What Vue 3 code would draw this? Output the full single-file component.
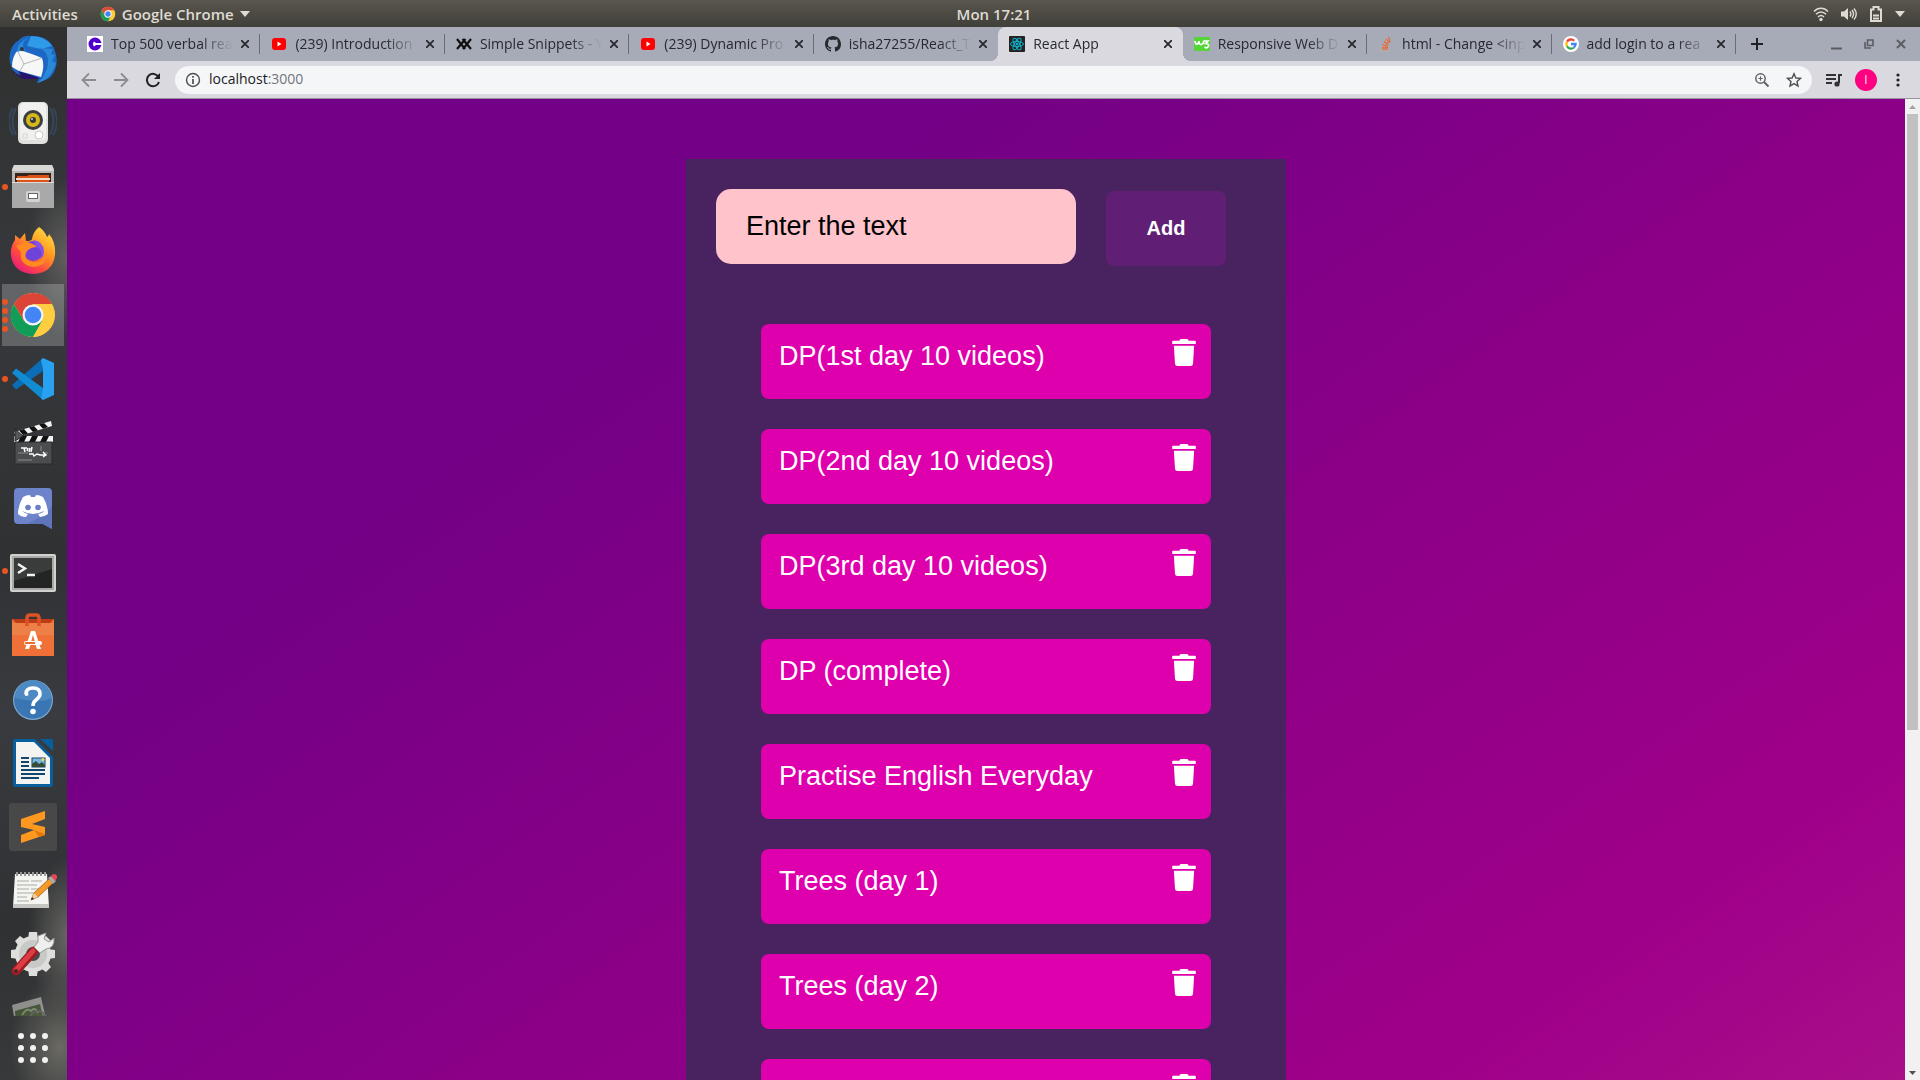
<script setup>
import { ref } from 'vue'

const tabs = [
  { icon: 'cube', title: 'Top 500 verbal rea' },
  { icon: 'youtube', title: '(239) Introduction' },
  { icon: 'snippets', title: 'Simple Snippets - Y' },
  { icon: 'youtube', title: '(239) Dynamic Pro' },
  { icon: 'github', title: 'isha27255/React_T' },
  { icon: 'react', title: 'React App', active: true },
  { icon: 'w3', title: 'Responsive Web D' },
  { icon: 'stack', title: 'html - Change <inp' },
  { icon: 'google', title: 'add login to a rea' }
]

const apps = [
  { name: 'thunderbird', dots: 0 },
  { name: 'rhythmbox', dots: 0 },
  { name: 'files', dots: 1 },
  { name: 'firefox', dots: 0 },
  { name: 'chrome', dots: 4, active: true },
  { name: 'vscode', dots: 1 },
  { name: 'clapper', dots: 0 },
  { name: 'discord', dots: 0 },
  { name: 'terminal', dots: 1 },
  { name: 'software', dots: 0 },
  { name: 'help', dots: 0 },
  { name: 'writer', dots: 0 },
  { name: 'sublime', dots: 0 },
  { name: 'notes', dots: 0 },
  { name: 'settings', dots: 0 },
  { name: 'viewer', dots: 1, faded: true }
]

const draft = ref('')
const items = ref([
  'DP(1st day 10 videos)',
  'DP(2nd day 10 videos)',
  'DP(3rd day 10 videos)',
  'DP (complete)',
  'Practise English Everyday',
  'Trees (day 1)',
  'Trees (day 2)',
  ''
])

function addItem() {
  if (draft.value.trim()) {
    items.value.push(draft.value)
    draft.value = ''
  }
}
function removeItem(index) {
  items.value.splice(index, 1)
}
</script>

<template>
  <div class="desktop">
    <header class="panel">
      <div class="panel-left">
        <button class="panel-btn">Activities</button>
        <button class="panel-btn app-menu">
          <svg width="16" height="16" viewBox="0 0 48 48">
            <circle cx="24" cy="24" r="22" fill="#fcc934" />
            <path d="M4.9 13A22 22 0 0 1 43.1 13H24L14.500 29.500z" fill="#dd4b3e" />
            <path d="M4.900 13A22 22 0 0 0 24 46L33.500 29.500H14.500z" fill="#1a9b57" />
            <circle cx="24" cy="24" r="11" fill="#fff" />
            <circle cx="24" cy="24" r="8" fill="#4285f4" />
          </svg>
          Google Chrome
          <svg width="10" height="6" viewBox="0 0 10 6"><path d="M0 0h10L5 6z" fill="#dfdbd2" /></svg>
        </button>
      </div>
      <time class="clock">Mon 17:21</time>
      <div class="panel-right">
        <svg width="16" height="16" viewBox="0 0 16 16" fill="none" stroke="#dfdbd2" stroke-width="1.600">
          <path d="M1 5.500C5 1.200 11 1.200 15 5.500M3 8.300C6 5.200 10 5.200 13 8.300M5 11C7 9 9 9 11 11" />
          <circle cx="8" cy="13.500" r="1.700" fill="#dfdbd2" stroke="none" />
        </svg>
        <svg width="16" height="16" viewBox="0 0 16 16" fill="none" stroke="#dfdbd2" stroke-width="1.400">
          <path d="M0 5.500h3L7 2v12L3 10.500H0z" fill="#dfdbd2" stroke="none" />
          <path d="M9 5.500q1.600 2.500 0 5M11 4q3 4 0 8M13 2.500q4.500 5.500 0 11" />
        </svg>
        <svg width="14" height="16" viewBox="0 0 14 16" fill="none" stroke="#dfdbd2" stroke-width="2">
          <path d="M2 15V3.500h2.500V1h5v2.500H12V15zM4 12.500h6M4 9.500h6" />
        </svg>
        <svg width="10" height="6" viewBox="0 0 10 6"><path d="M0 0h10L5 6z" fill="#dfdbd2" /></svg>
      </div>
    </header>

    <div class="workspace">
      <nav class="dock">
        <div class="dock-list">
          <button v-for="app in apps" :key="app.name" class="dock-item" :class="{ active: app.active, faded: app.faded }" :aria-label="app.name">
            <span class="dots"><i v-for="n in app.dots" :key="n"></i></span>
            <svg width="48" height="48" viewBox="0 0 48 48">
              <g v-if="app.name === 'thunderbird'">
                <path d="M10 5Q15 0 22 1Q38 0 45 13Q50 25 46 35Q42 44 36 45L28 48L30 43Q10 44 3 34Q-2 22 3 12Q6 7 10 5z" fill="#1c67c4" />
                <path d="M22 1Q36 1 43 11L32 14L18 11z" fill="#2f9be8" />
                <path d="M30 13Q42 17 38 34L33 44L28 48Q42 45 47 28L43 26L46 20L42 19L44 14z" fill="#2b8ad8" />
                <path d="M3 30L5 38L12 41L9 36L28 42L31 44L14 44Q3 39 3 30z" fill="#28126b" />
                <path d="M9 15Q19 17 33 23Q36 31 32 42L10 36L3 32Q3 21 9 15z" fill="#f7f7f8" />
                <path d="M9 17L15 29L33 23M15 29L11 36" fill="none" stroke="#b7b8bd" />
                <path d="M8 17Q8 7 19 3Q11 8 16 15z" fill="#258bd9" />
                <circle cx="13" cy="14" r="2" fill="#3c3340" />
              </g>
              <g v-else-if="app.name === 'rhythmbox'">
                <path d="M7 9Q0 22 7 36M4 9Q-4 22 4 36M41 9Q48 22 41 36M44 9Q52 22 44 36" fill="none" stroke="#36475c" stroke-width="2" />
                <rect x="9" y="3" width="30" height="42" rx="5" fill="#e0e0de" />
                <rect x="11" y="4" width="26" height="37" rx="4" fill="#f0f0ee" />
                <circle cx="24" cy="21" r="10" fill="#3c3f42" />
                <circle cx="24" cy="21" r="7" fill="#d4b818" />
                <circle cx="24" cy="21" r="3" fill="#34393d" />
                <circle cx="23" cy="20" r="1" fill="#c9d2d8" />
                <circle cx="30" cy="36" r="4" fill="#fff" stroke="#c8c8c5" />
                <rect x="14" y="35" width="4" height="4" fill="none" stroke="#d5d5d2" />
              </g>
              <g v-else-if="app.name === 'files'">
                <path d="M5 2H43L45 6V45H3V6z" fill="#b6b6b5" />
                <path d="M5 2H43L45 8H3z" fill="#d8d8d7" />
                <path d="M6 10H42V20H6z" fill="#35241c" />
                <path d="M8 13h10l2-1h20v8H8z" fill="#dd5318" />
                <path d="M7 15h34v2H7z" fill="#f5dcc4" />
                <path d="M3 19H45V45H3z" fill="#aaa9a9" />
                <path d="M3 19H45V20H3z" fill="#dcdcdb" />
                <rect x="17" y="28" width="14" height="11" rx="2" fill="#d2d2d1" />
                <rect x="19.500" y="30.500" width="9" height="5" fill="#fff" stroke="#686868" />
              </g>
              <g v-else-if="app.name === 'firefox'">
                <defs>
                  <linearGradient id="ffBody" x1="1" y1="0" x2="0.300" y2="1">
                    <stop offset="0" stop-color="#fff14b" /><stop offset="0.450" stop-color="#ff9a22" /><stop offset="0.750" stop-color="#ff4a3e" /><stop offset="1" stop-color="#e91f78" />
                  </linearGradient>
                </defs>
                <path d="M30 0Q35 3 38 10Q40 9 40 7Q47 15 46 28Q44 46 24 47Q5 46 2 29Q1 20 6 13V8L11 12L16 6L17 14Q23 14 23 12Q24 5 30 0z" fill="url(#ffBody)" />
                <circle cx="24" cy="24" r="10" fill="#7043d8" />
                <path d="M14 16Q22 14 28 20Q22 20 18 24Q13 32 24 35Q34 35 36 26Q40 38 25 40Q10 38 12 25L7 19z" fill="#ff8b22" />
                <path d="M24 13Q34 14 35 24Q35 30 31 32Q35 24 28 20z" fill="#8851e6" />
              </g>
              <g v-else-if="app.name === 'chrome'">
                <circle cx="24" cy="24" r="22" fill="#ffcd40" />
                <path d="M4.900 13A22 22 0 0 1 43.100 13H24L14.500 29.500z" fill="#db4437" />
                <path d="M4.900 13A22 22 0 0 0 24 46L33.500 29.500L14.500 29.500z" fill="#0f9d58" />
                <path d="M43 14H24V24L33.500 29.500L24 46A22 22 0 0 0 43 14z" fill="#ffcd40" />
                <circle cx="24" cy="24" r="10.500" fill="#f4f4f4" />
                <circle cx="24" cy="24" r="8.300" fill="#4285f4" />
              </g>
              <g v-else-if="app.name === 'vscode'">
                <path d="M3 30L34 3V16L7 34.500z" fill="#0b6db5" />
                <path d="M3 18L7 13.500L34 33V45z" fill="#118bd2" />
                <path d="M34 3L45 8V40L34 45L32 43L34 35V14L32 5z" fill="#29a1f1" />
              </g>
              <g v-else-if="app.name === 'clapper'">
                <path d="M5 13L42 2L43 7L7 18z" fill="#f3f3f3" />
                <path d="M10 11.500L15 10L19 14.500L14 16zM20 8.500L25 7L29 11.500L24 13zM30 5.500L35 4L39 8L34 9.700z" fill="#111" />
                <rect x="5" y="17" width="39" height="6" fill="#f3f3f3" />
                <path d="M12 17h6l-3 6H9zM23 17h6l-3 6h-6zM34 17h6l-3 6h-6z" fill="#111" />
                <path d="M6 10L14 17L6 22z" fill="#55585b" stroke="#24282a" />
                <rect x="6" y="23" width="37" height="22" fill="#4c4d4e" stroke="#292b2c" />
                <path d="M12 29h6M15 29l1 4M18 32l1-3M20 33l1-4M22 33l1-5M20 35h4l1 2 3-2 3 1h6M34 33l3 3-3 2" stroke="#fff" stroke-width="1.500" fill="none" />
                <path d="M9 34h10M9 41h14M32 27v5M36 34h3" stroke="#8b8c8c" fill="none" />
              </g>
              <g v-else-if="app.name === 'discord'">
                <path d="M9 5H39Q43 5 43 9V46L34 41H9Q5 41 5 37V9Q5 5 9 5z" fill="#6d83ca" />
                <path d="M43 23V46L34 41H18L37 31z" fill="#5e74bb" />
                <path d="M14 14Q17 12 21 12L22 14H26L27 12Q31 12 34 14Q39 22 39 31Q35 34 31 34L29 31Q34 30 35 28Q29 31 24 31Q19 31 13 28Q15 30 19 31L17 34Q12 34 9 31Q9 22 14 14z" fill="#fff" />
                <circle cx="19" cy="24.500" r="2.800" fill="#687fc5" /><circle cx="29" cy="24.500" r="2.800" fill="#687fc5" />
              </g>
              <g v-else-if="app.name === 'terminal'">
                <rect x="1" y="7" width="46" height="38" rx="2" fill="#d1d1d0" />
                <rect x="3" y="9" width="42" height="34" fill="#a8a8a7" />
                <rect x="5" y="11" width="38" height="30" fill="#222524" />
                <path d="M5 11H43V22L5 34z" fill="#393c3b" />
                <path d="M9 17L16 21.500L9 26M18 28H26" fill="none" stroke="#f1f1f1" stroke-width="2.500" />
              </g>
              <g v-else-if="app.name === 'software'">
                <path d="M3 8H45V45H3z" fill="#ef7138" />
                <path d="M3 8H45L41 12H7z" fill="#bd3b17" />
                <path d="M3 12H45V24H3z" fill="#ed8049" />
                <path d="M18 15V7Q18 4 21 4H27Q30 4 30 7V15" fill="none" stroke="#de5224" stroke-width="3.500" />
                <path d="M16 38L22 20H26L32 38H28L26 32H22L20 38z" fill="#fff" />
                <path d="M24 24L26 31H22z" fill="#ef7138" />
                <path d="M17 32H31" stroke="#fff" stroke-width="4" stroke-linecap="round" />
                <path d="M16 32H26" stroke="#ee6c32" stroke-width="2" />
              </g>
              <g v-else-if="app.name === 'help'">
                <circle cx="24" cy="25" r="20" fill="#7ca8cf" />
                <circle cx="24" cy="25" r="18.800" fill="#3976b3" />
                <path d="M6 23A18 18 0 0 1 42 23Q34 29 6 23z" fill="#4d8ac3" />
                <path d="M17 19Q17 13 24 13Q31 13 31 19Q31 22 27 25Q24 27 24 31" fill="none" stroke="#fff" stroke-width="3.500" />
                <circle cx="17.500" cy="19" r="2" fill="#fff" />
                <circle cx="24" cy="36.500" r="2.800" fill="#fff" />
              </g>
              <g v-else-if="app.name === 'writer'">
                <path d="M6 0H26L44 18V46Q44 48 42 48H6Q4 48 4 46V2Q4 0 6 0z" fill="#075e9c" />
                <path d="M31 0H42Q44 0 44 2V12z" fill="#075e9c" />
                <path d="M7 3H25L41 19V45H7z" fill="#f3f3f2" />
                <path d="M12 19h8M12 23h8M12 27h8M12 31h24M12 35h24M12 39h18" stroke="#12456b" stroke-width="2" />
                <rect x="23" y="19" width="13" height="9" fill="#79b7df" stroke="#12456b" />
                <path d="M23 28V25L27 22L30 25L33 23L36 26V28z" fill="#344d3a" /><circle cx="34" cy="20.500" r="1.500" fill="#f8d24b" />
              </g>
              <g v-else-if="app.name === 'sublime'">
                <rect width="48" height="48" rx="3" fill="#484848" />
                <path d="M12 16L36 8V16L23 21L36 24V32L12 40V32L25 27L12 24z" fill="#ff9820" />
                <path d="M25 27L36 31V32L30 34z" fill="#e5780d" />
              </g>
              <g v-else-if="app.name === 'notes'">
                <path d="M6 7H38L40 40H4z" fill="#f4f4f0" /><path d="M4 37H40V41H4z" fill="#c4c5c0" />
                <path d="M8 9V5M12 9V5M16 9V5M20 9V5M24 9V5M28 9V5M32 9V5M36 9V5" stroke="#999" stroke-width="2" />
                <path d="M8 14h12M22 14h11M8 18h20M8 22h12M22 22h9M8 26h17M8 30h10M8 34h12" stroke="#a9a9a5" />
                <path d="M22 33L25 26L40 12L44 16L29 30z" fill="#f39b28" stroke="#a75c17" stroke-width="0.800" />
                <path d="M22 33L25 26L29 30z" fill="#edcea4" /><path d="M22 33L23 30L25 32z" fill="#222" />
                <path d="M39 11L42 9L47 14L44 17z" fill="#a8abad" /><path d="M42 9L44 7Q49 7 48 11L46 14z" fill="#e74752" />
              </g>
              <g v-else-if="app.name === 'settings'">
                <circle cx="24" cy="23" r="18" fill="#dededc" />
                <path d="M20 1h8l1 8h-10zM20 45h8l1-8h-10zM2 19v8l8 1v-10zM46 19v8l-8 1v-10zM6 10l5-5 7 5-7 7zM42 10l-5-5-7 5 7 7zM6 36l5 5 7-5-7-7zM42 36l-5 5-7-5 7-7z" fill="#dededc" />
                <circle cx="24" cy="23" r="14" fill="#c9cac8" /><circle cx="24" cy="23" r="7" fill="#484a4b" />
                <path d="M7 40L25 20" stroke="#9d1c22" stroke-width="9" stroke-linecap="round" />
                <path d="M7 39L24 20" stroke="#dc3d43" stroke-width="5" stroke-linecap="round" />
                <path d="M25 16L29 11L29 5L37 2L35 8L40 11L45 7Q46 17 37 18L31 22z" fill="#efefed" stroke="#969795" />
                <circle cx="7" cy="40" r="2" fill="#4a2527" />
              </g>
              <g v-else>
                <path d="M3 10L32 2L36 20L6 28z" fill="#c8c8c5" /><path d="M6 16L31 9L34 22L7 28z" fill="#4e6536" />
                <path d="M13 20q5-8 9-4q4-5 7 2" fill="none" stroke="#a4b58d" stroke-width="2" /><circle cx="29" cy="24" r="8" fill="none" stroke="#777" stroke-width="2" />
              </g>
            </svg>
          </button>
        </div>
        <button class="dock-item" aria-label="Show applications">
          <svg width="30" height="30" viewBox="0 0 30 30" fill="#f2f2f0">
            <template v-for="r in 3" :key="r">
              <circle v-for="c in 3" :key="c" :cx="c * 12 - 9" :cy="r * 12 - 9" r="3" />
            </template>
          </svg>
        </button>
      </nav>

      <main class="browser">
        <div class="tabstrip">
          <div class="tabs">
            <div v-for="(tab, i) in tabs" :key="i" class="tab" :class="{ active: tab.active, plain: tabs[i + 1] && tabs[i + 1].active }">
              <svg class="favicon" width="16" height="16" viewBox="0 0 16 16">
                <g v-if="tab.icon === 'cube'">
                  <rect width="16" height="16" fill="#fff" /><circle cx="8" cy="8" r="6.500" fill="#5200cc" /><path d="M7 5.500Q5 8 7 10.500L9 9H15V7H9z" fill="#fff" />
                </g>
                <g v-else-if="tab.icon === 'youtube'">
                  <rect x="1" y="2" width="14" height="12" rx="3" fill="#f00" /><path d="M6.500 5.500L10.500 8L6.500 10.500z" fill="#fff" />
                </g>
                <g v-else-if="tab.icon === 'snippets'" fill="none" stroke="#111" stroke-width="2.200">
                  <path d="M1 3L9 13M9.500 3L1 13M6.500 3L15 13M15 3L7 13" />
                </g>
                <path v-else-if="tab.icon === 'github'" fill="#24292e" d="M8 0C3.580 0 0 3.580 0 8c0 3.540 2.290 6.530 5.470 7.590.4.070.550-.170.550-.380 0-.190-.010-.820-.010-1.490-2.010.370-2.530-.490-2.690-.940-.090-.230-.480-.940-.820-1.130-.280-.150-.680-.520-.010-.530.630-.010 1.080.580 1.230.820.720 1.210 1.870.870 2.330.660.070-.520.280-.870.510-1.070-1.780-.2-3.640-.890-3.640-3.950 0-.870.310-1.590.820-2.150-.080-.2-.360-1.020.080-2.120 0 0 .670-.210 2.200.820.640-.180 1.320-.270 2-.270s1.360.090 2 .270c1.530-1.040 2.200-.820 2.200-.820.440 1.100.160 1.920.080 2.120.510.560.820 1.270.820 2.150 0 3.070-1.870 3.750-3.650 3.950.290.250.540.730.540 1.480 0 1.070-.010 1.930-.010 2.200 0 .210.150.460.550.380A8.010 8.010 0 0 0 16 8c0-4.420-3.580-8-8-8z" />
                <g v-else-if="tab.icon === 'react'" fill="none" stroke="#0fb5cd">
                  <rect width="16" height="16" rx="1" fill="#222" stroke="none" />
                  <ellipse cx="8" cy="8" rx="6.500" ry="2.500" /><ellipse cx="8" cy="8" rx="6.500" ry="2.500" transform="rotate(60 8 8)" /><ellipse cx="8" cy="8" rx="6.500" ry="2.500" transform="rotate(120 8 8)" />
                  <circle cx="8" cy="8" r="1" fill="#0fb5cd" />
                </g>
                <g v-else-if="tab.icon === 'w3'" fill="none" stroke="#fff" stroke-width="1.700">
                  <rect y="1" width="16" height="14" fill="#56d53b" stroke="none" />
                  <path d="M1 5Q1.500 9 3.500 8Q5 7 5 5Q5 9 7.500 8.500Q9 8 10 5H14L11.500 7.500Q15 7.500 14.500 10Q13.500 13 10.500 11" />
                </g>
                <g v-else-if="tab.icon === 'stack'" fill="none">
                  <path d="M2 10V15H11V10" stroke="#bcaba7" stroke-width="1.300" /><path d="M4 13H10M4 11L10 11.500M4.500 8.500L10 10M6 5.500L10.500 8.500M8 3L11.500 7M10.500 1L12 6" stroke="#f4601c" stroke-width="1.100" />
                </g>
                <g v-else fill="none" stroke-width="2.300">
                  <circle cx="8" cy="8" r="8" fill="#fff" />
                  <path d="M11.200 4.800A4.600 4.600 0 0 0 4 5.700" stroke="#ea4335" /><path d="M4 5.700A4.600 4.600 0 0 0 4 10.300" stroke="#fbbc05" /><path d="M4 10.300A4.600 4.600 0 0 0 11 11.500" stroke="#34a853" /><path d="M11 11.500Q12.600 10 12.600 8H8" stroke="#4285f4" />
                </g>
              </svg>
              <span class="title">{{ tab.title }}</span>
              <button class="close" aria-label="Close tab">
                <svg width="8" height="8" viewBox="0 0 8 8"><path d="M0 0L8 8M8 0L0 8" stroke="currentColor" stroke-width="1.800" /></svg>
              </button>
            </div>
          </div>
          <div class="window-actions">
            <button class="new-tab" aria-label="New tab"><svg width="12" height="12" viewBox="0 0 12 12"><path d="M6 0V12M0 6H12" stroke="#202124" stroke-width="2" /></svg></button>
            <button aria-label="Minimize"><svg width="11" height="12" viewBox="0 0 11 12"><path d="M0 10.500H11" stroke="#5b5d63" stroke-width="2" /></svg></button>
            <button aria-label="Restore"><svg width="10" height="10" viewBox="0 0 10 10"><path d="M3.500 1H9V6.500H3.500zM1 3V9H7" fill="none" stroke="#5b5d63" stroke-width="1.600" /></svg></button>
            <button aria-label="Close window"><svg width="10" height="10" viewBox="0 0 10 10"><path d="M1 1L9 9M9 1L1 9" stroke="#5b5d63" stroke-width="2" /></svg></button>
          </div>
        </div>

        <div class="toolbar">
          <button class="tool" aria-label="Back"><svg width="16" height="16" viewBox="0 0 16 16"><path d="M15 8H2M8 1.500L1.500 8L8 14.500" fill="none" stroke="#8b8b90" stroke-width="1.800" /></svg></button>
          <button class="tool" aria-label="Forward"><svg width="16" height="16" viewBox="0 0 16 16"><path d="M1 8H14M8 1.500L14.500 8L8 14.500" fill="none" stroke="#8b8b90" stroke-width="1.800" /></svg></button>
          <button class="tool" aria-label="Reload"><svg width="16" height="16" viewBox="0 0 16 16"><path d="M13.500 5A6.200 6.200 0 1 0 14 10" fill="none" stroke="#202124" stroke-width="2" /><path d="M15 1V7H9z" fill="#202124" /></svg></button>
          <div class="omnibox">
            <svg width="16" height="16" viewBox="0 0 16 16"><circle cx="8" cy="8" r="6.500" fill="none" stroke="#4b4e53" stroke-width="1.400" /><path d="M8 7V12M8 4V5.800" stroke="#4b4e53" stroke-width="1.700" /></svg>
            <a class="address" href="#">localhost<span>:3000</span></a>
            <button class="tool" aria-label="Zoom"><svg width="16" height="16" viewBox="0 0 16 16" fill="none" stroke="#5f6368"><circle cx="6.500" cy="6.500" r="4.700" stroke-width="1.500" /><path d="M10 10L14.500 14.500" stroke-width="2" /><path d="M6.500 4.300V8.700M4.300 6.500H8.700" /></svg></button>
            <button class="tool" aria-label="Bookmark"><svg width="16" height="16" viewBox="0 0 16 16"><path d="M8 1.800L9.900 6L14.500 6.400L11 9.500L12 14L8 11.600L4 14L5 9.500L1.500 6.400L6.100 6z" fill="none" stroke="#4b4e53" stroke-width="1.400" /></svg></button>
          </div>
          <div class="profile">
            <button class="tool" aria-label="Media"><svg width="16" height="14" viewBox="0 0 16 14"><path d="M0 2H10M0 6H10M0 10H6M13 10V2H16" fill="none" stroke="#303236" stroke-width="2" /><circle cx="11" cy="11" r="2.600" fill="#303236" /></svg></button>
            <button class="tool" aria-label="Profile"><span class="avatar">I</span></button>
            <button class="tool" aria-label="Menu"><svg width="4" height="14" viewBox="0 0 4 14" fill="#202124"><circle cx="2" cy="2" r="1.600" /><circle cx="2" cy="7" r="1.600" /><circle cx="2" cy="12" r="1.600" /></svg></button>
          </div>
        </div>

        <div class="viewport">
          <div class="page">
            <section class="card">
              <form class="entry" @submit.prevent="addItem">
                <input v-model="draft" type="text" placeholder="Enter the text" aria-label="Enter the text" />
                <button type="submit">Add</button>
              </form>
              <ul class="list">
                <li v-for="(item, i) in items" :key="i">
                  <span>{{ item }}</span>
                  <button aria-label="Delete" @click="removeItem(i)">
                    <svg width="24" height="27" viewBox="0 0 448 512"><path fill="#fff" d="M432 32H312l-9.400-18.700A24 24 0 0 0 281.100 0H166.800a23.720 23.720 0 0 0-21.400 13.300L136 32H16A16 16 0 0 0 0 48v32a16 16 0 0 0 16 16h416a16 16 0 0 0 16-16V48a16 16 0 0 0-16-16zM53.200 467a48 48 0 0 0 47.900 45h245.800a48 48 0 0 0 47.900-45L416 128H32z" /></svg>
                  </button>
                </li>
              </ul>
            </section>
          </div>
          <div class="scrollbar">
            <svg width="15" height="15" viewBox="0 0 15 15"><path d="M4 10L7.500 6L11 10z" fill="#a3a3a3" /></svg>
            <div class="track"><div class="thumb"></div></div>
            <svg width="15" height="15" viewBox="0 0 15 15"><path d="M4 6H11L7.500 10z" fill="#505050" /></svg>
          </div>
        </div>
      </main>
    </div>
  </div>
</template>

<style>
body {
  overflow: hidden;
}
</style>

<style scoped>
* {
  box-sizing: border-box;
}
button {
  border: 0;
  padding: 0;
  background: none;
  font: inherit;
  color: inherit;
}
svg {
  display: block;
  flex: none;
}
.desktop {
  height: 100vh;
  display: flex;
  flex-direction: column;
  overflow: hidden;
  font-family: "Open Sans", "Noto Sans", sans-serif;
  font-size: 14px;
}
.panel {
  flex: none;
  height: 27px;
  display: flex;
  align-items: center;
  background: linear-gradient(#59564e, #403f39);
  color: #dfdbd2;
  font-size: 15px;
  font-weight: 600;
  line-height: 20px;
}
.panel-left {
  flex: 1 1 83px;
  display: flex;
  gap: 22px;
  padding-left: 12px;
}
.app-menu {
  display: flex;
  align-items: center;
  gap: 6px;
}
.panel-right {
  flex: 1 1 0;
  display: flex;
  align-items: center;
  justify-content: flex-end;
  gap: 12px;
  padding-right: 15px;
}
.workspace {
  flex: 1;
  min-height: 0;
  display: flex;
}
.dock {
  flex: none;
  width: 67px;
  display: flex;
  flex-direction: column;
  background:
    radial-gradient(ellipse 40px 80px at 66px 230px, #5f5e5c, transparent),
    radial-gradient(ellipse 40px 80px at 68px 910px, #666560, transparent),
    radial-gradient(ellipse 50px 70px at 60px 1020px, #6a6962, transparent),
    linear-gradient(#303030, #36393c 25%, #303133 50%, #393b40 65%, #2f3133 85%, #37393b);
}
.dock-list {
  flex: 1;
  min-height: 0;
  overflow: hidden;
}
.dock-item {
  width: 66px;
  height: 64px;
  display: flex;
  align-items: center;
  justify-content: center;
  position: relative;
}
.dock-item.active {
  background: linear-gradient(#ffffff38, #ffffff38) 2px 1px / 62px 62px no-repeat;
}
.dock-item.faded {
  opacity: 0.6;
}
.dots {
  position: absolute;
  left: 2px;
  top: 0;
  height: 100%;
  display: flex;
  flex-direction: column;
  justify-content: center;
  gap: 3px;
}
.dots i {
  width: 6px;
  height: 6px;
  border-radius: 50%;
  background: #e95420;
}
.browser {
  flex: 1;
  min-width: 0;
  display: flex;
  flex-direction: column;
}
.tabstrip {
  flex: none;
  height: 34px;
  display: flex;
  padding-left: 9px;
  background: #a7abb8;
  color: #26292e;
}
.tabs {
  flex: 1;
  min-width: 0;
  display: flex;
}
.tab {
  flex: 1 1 0;
  min-width: 0;
  display: flex;
  align-items: center;
  padding: 0 11px;
  position: relative;
}
.tab::after {
  content: "";
  position: absolute;
  right: 0;
  top: 7px;
  width: 1px;
  height: 20px;
  background: #6b6e77;
}
.tab.active::after,
.tab.plain::after {
  display: none;
}
.tab.active {
  background: #dad9e0;
  border-radius: 8px 8px 0 0;
}
.tab.active::before {
  content: "";
  position: absolute;
  left: -8px;
  right: -8px;
  bottom: 0;
  height: 8px;
  background:
    radial-gradient(circle at 0 0, transparent 8px, #dad9e0 8px) left / 8px 8px no-repeat,
    radial-gradient(circle at 100% 0, transparent 8px, #dad9e0 8px) right / 8px 8px no-repeat;
}
.title {
  flex: 1;
  min-width: 0;
  margin-left: 8px;
  overflow: hidden;
  white-space: nowrap;
  line-height: 20px;
  mask-image: linear-gradient(to right, #000 calc(100% - 32px), transparent);
}
.close {
  flex: none;
  width: 8px;
  height: 8px;
  margin: 0 0 0 8px;
}
.window-actions {
  flex: none;
  width: 184px;
  display: flex;
  align-items: center;
  gap: 22px;
  padding-left: 15px;
}
.new-tab {
  margin-right: 46px;
}
.toolbar {
  flex: none;
  height: 38px;
  display: flex;
  align-items: center;
  padding: 0 6px;
  background: #dad9e0;
  border-bottom: 1px solid #97949d;
}
.tool {
  flex: none;
  width: 32px;
  height: 28px;
  display: flex;
  align-items: center;
  justify-content: center;
}
.omnibox {
  flex: 1;
  height: 28px;
  display: flex;
  align-items: center;
  margin: 0 6px;
  padding: 0 2px 0 10px;
  border-radius: 14px;
  background: #f5f6f8;
}
.address {
  flex: 1;
  margin-left: 8px;
  padding-bottom: 2px;
  color: #202124;
  text-decoration: none;
  line-height: 20px;
}
.address span {
  color: #72757a;
}
.profile {
  display: flex;
}
.avatar {
  width: 22px;
  height: 22px;
  border-radius: 50%;
  background: #ff0080;
  color: #ffd3e8;
  font: 12px/22px Roboto, sans-serif;
  text-align: center;
}
.viewport {
  flex: 1;
  min-height: 0;
  display: flex;
}
.page {
  flex: 1;
  min-width: 0;
  overflow: hidden;
  padding-top: 60px;
  background: linear-gradient(145deg, #730086 28%, #8b0087 57%, #9f0089 85%, #a80f89 100%);
  font-family: "Liberation Sans", Arial, sans-serif;
}
.card {
  width: 600px;
  max-width: 100%;
  margin: 0 auto;
  padding: 30px 30px 60px;
  background: #49235f;
}
.entry {
  display: flex;
  gap: 30px;
}
.entry input {
  width: 360px;
  height: 75px;
  padding: 0 30px;
  border: 0;
  border-radius: 15px;
  background: #ffc3cb;
  color: #000;
  font: 27px "Liberation Sans", Arial, sans-serif;
}
.entry input::placeholder {
  color: #000;
  opacity: 1;
}
.entry button {
  width: 120px;
  height: 75px;
  margin-top: 2px;
  border-radius: 8px;
  background: #601f75;
  color: #fff;
  font-size: 20px;
  font-weight: 700;
}
.list {
  margin: 58px 45px 0;
  padding: 0;
  list-style: none;
}
.list li {
  height: 75px;
  display: flex;
  align-items: flex-start;
  justify-content: space-between;
  margin-bottom: 30px;
  padding: 15px 15px 0 18px;
  border-radius: 8px;
  background: #df00ad;
  color: #fff;
  font-size: 27px;
  line-height: 35px;
}
.scrollbar {
  flex: none;
  width: 15px;
  display: flex;
  flex-direction: column;
  background: #f1f1f1;
}
.track {
  flex: 1;
  padding: 0 2px;
}
.thumb {
  height: 64.8%;
  background: #c1c1c1;
}
</style>
